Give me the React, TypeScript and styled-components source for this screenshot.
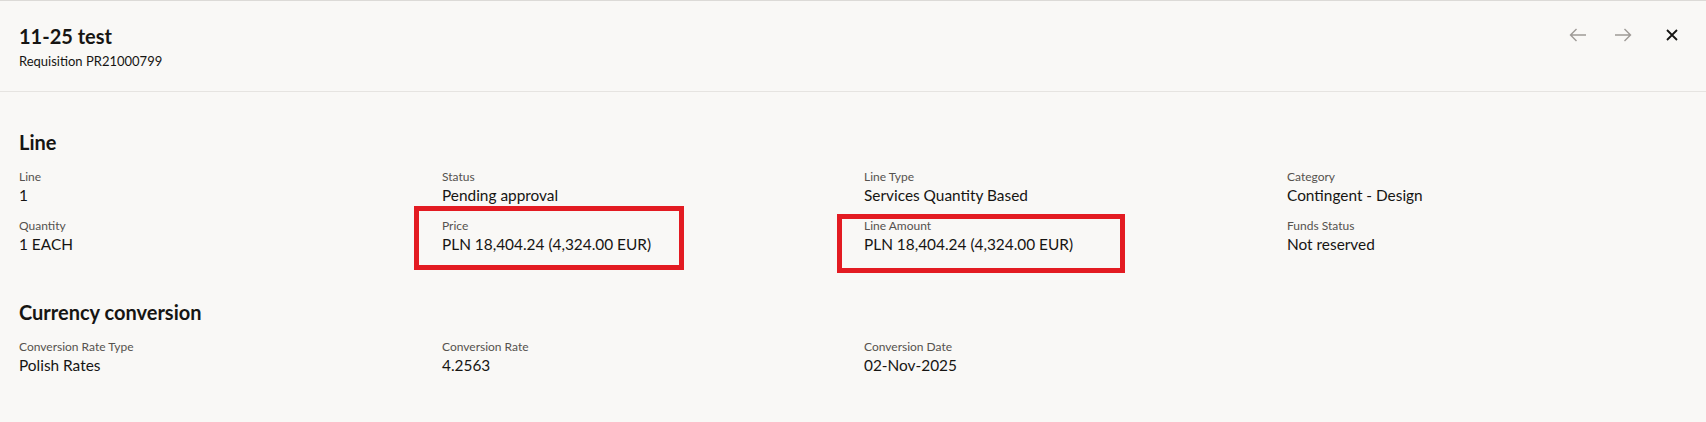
import styled, { createGlobalStyle } from "styled-components";

const GlobalStyle = createGlobalStyle`
  html, body {
    margin: 0;
    padding: 0;
    background: #f9f8f6;
  }
  body {
    font-family: Lato, "Noto Sans", Arial, sans-serif;
    color: #161513;
  }
`;

const Page = styled.div`
  min-height: 422px;
  background: #f9f8f6;
  border-top: 1px solid #dcdad7;
`;

const Header = styled.header`
  display: flex;
  align-items: flex-start;
  justify-content: space-between;
  padding: 23px 12px 21px 19px;
  border-bottom: 1px solid #e6e4e1;
`;

const Title = styled.h1`
  margin: 0;
  font-size: 20px;
  line-height: 24px;
  font-weight: 700;
`;

const Subtitle = styled.div`
  margin-top: 4px;
  font-size: 13px;
  line-height: 18px;
`;

const Actions = styled.div`
  display: flex;
  align-items: center;
  margin-top: -11px;
`;

const IconButton = styled.button<{ $disabled?: boolean; $spaced?: boolean }>`
  width: 44px;
  height: 44px;
  display: flex;
  align-items: center;
  justify-content: center;
  padding: 0;
  margin-left: ${({ $spaced }) => ($spaced ? "5px" : "1px")};
  background: none;
  border: none;
  color: ${({ $disabled }) => ($disabled ? "#9e9a96" : "#161513")};
  cursor: ${({ $disabled }) => ($disabled ? "default" : "pointer")};
`;

const Body = styled.main`
  padding: 38px 0 0 19px;
`;

const SectionTitle = styled.h2<{ $top?: number }>`
  margin: ${({ $top }) => $top ?? 0}px 0 15px;
  font-size: 20px;
  line-height: 24px;
  font-weight: 700;
`;

const FieldGrid = styled.div`
  display: grid;
  grid-template-columns: 423px 422px 423px 1fr;
  row-gap: 13px;
`;

const Field = styled.div`
  position: relative;
  display: flex;
  flex-direction: column;
`;

const Label = styled.span`
  font-size: 12px;
  line-height: 16px;
  color: #55524e;
`;

const Value = styled.span`
  font-size: 15.4px;
  line-height: 20px;
  color: #161513;
`;

const Highlight = styled.div<{ $left: number; $top: number; $w: number; $h: number }>`
  position: absolute;
  left: ${({ $left }) => $left}px;
  top: ${({ $top }) => $top}px;
  width: ${({ $w }) => $w}px;
  height: ${({ $h }) => $h}px;
  box-sizing: border-box;
  border: 5px solid #e31b22;
  pointer-events: none;
`;

const ArrowLeft = () => (
  <svg width="18" height="14" viewBox="0 0 18 14" fill="none" stroke="currentColor" strokeWidth="1.4">
    <path d="M17 7H1.5M7.5 1L1.5 7l6 6" />
  </svg>
);

const ArrowRight = () => (
  <svg width="18" height="14" viewBox="0 0 18 14" fill="none" stroke="currentColor" strokeWidth="1.4">
    <path d="M1 7h15.5M10.5 1l6 6-6 6" />
  </svg>
);

const CloseIcon = () => (
  <svg width="12" height="12" viewBox="0 0 12 12" fill="none" stroke="currentColor" strokeWidth="1.8">
    <path d="M1 1l10 10M11 1L1 11" />
  </svg>
);

type Item = {
  label: string;
  value: string;
  box?: { left: number; top: number; w: number; h: number };
};

const lineItems: Item[] = [
  { label: "Line", value: "1" },
  { label: "Status", value: "Pending approval" },
  { label: "Line Type", value: "Services Quantity Based" },
  { label: "Category", value: "Contingent - Design" },
  { label: "Quantity", value: "1 EACH" },
  {
    label: "Price",
    value: "PLN 18,404.24 (4,324.00 EUR)",
    box: { left: -28, top: -12, w: 270, h: 64 },
  },
  {
    label: "Line Amount",
    value: "PLN 18,404.24 (4,324.00 EUR)",
    box: { left: -27, top: -4, w: 288, h: 59 },
  },
  { label: "Funds Status", value: "Not reserved" },
];

const conversionItems: Item[] = [
  { label: "Conversion Rate Type", value: "Polish Rates" },
  { label: "Conversion Rate", value: "4.2563" },
  { label: "Conversion Date", value: "02-Nov-2025" },
];

function Fields({ items }: { items: Item[] }) {
  return (
    <FieldGrid>
      {items.map((it) => (
        <Field key={it.label}>
          <Label>{it.label}</Label>
          <Value>{it.value}</Value>
          {it.box && (
            <Highlight $left={it.box.left} $top={it.box.top} $w={it.box.w} $h={it.box.h} />
          )}
        </Field>
      ))}
    </FieldGrid>
  );
}

export default function App() {
  return (
    <>
      <GlobalStyle />
      <Page>
        <Header>
          <div>
            <Title>11-25 test</Title>
            <Subtitle>Requisition PR21000799</Subtitle>
          </div>
          <Actions>
            <IconButton $disabled aria-label="Previous">
              <ArrowLeft />
            </IconButton>
            <IconButton $disabled aria-label="Next">
              <ArrowRight />
            </IconButton>
            <IconButton $spaced aria-label="Close">
              <CloseIcon />
            </IconButton>
          </Actions>
        </Header>
        <Body>
          <SectionTitle>Line</SectionTitle>
          <Fields items={lineItems} />
          <SectionTitle $top={46}>Currency conversion</SectionTitle>
          <Fields items={conversionItems} />
        </Body>
      </Page>
    </>
  );
}
